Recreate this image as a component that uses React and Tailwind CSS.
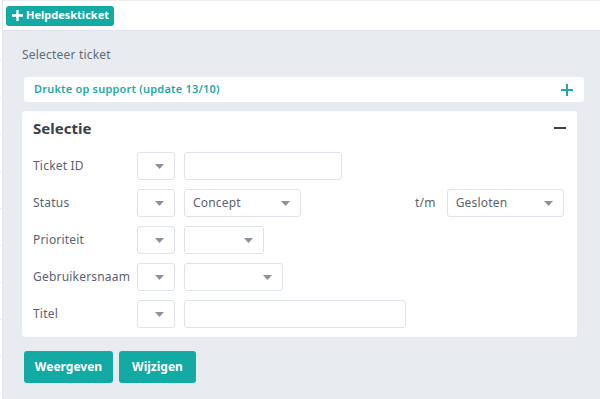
import React from 'react';

const Caret = () => (
  <svg width="9" height="5" viewBox="0 0 9 5" className="shrink-0">
    <path d="M0 0h9L4.5 5z" fill="#8a909c" />
  </svg>
);

const Select = ({ width, value }) => (
  <div
    className={`h-[28px] ${width} flex items-center justify-between pl-2 pr-[10px] bg-white border border-[#dde2ea] rounded-[3px] text-[12px] tracking-[0.2px] text-[#5b6270]`}
  >
    <span>{value}</span>
    <Caret />
  </div>
);

const Input = ({ width }) => (
  <div className={`h-[28px] ${width} bg-white border border-[#dde2ea] rounded-[3px]`} />
);

const Row = ({ label, children }) => (
  <div className="flex items-center h-[28px]">
    <div className="w-[104px] text-[12px] tracking-[0.2px] text-[#5b6270]">{label}</div>
    <Select width="w-[38px]" />
    <div className="ml-[9px] flex items-center">{children}</div>
  </div>
);

export default function App() {
  const rows = [0, 1, 2, 3, 4, 5, 6, 7, 8, 9];
  return (
    <div className="w-[600px] h-[399px] flex overflow-hidden bg-white" style={{ fontFamily: '"Noto Sans", "Open Sans", sans-serif' }}>
      <div className="w-[3px] border-r border-[#e3e6ea] flex flex-col pt-[60px] gap-[36px]">
        {rows.map((r) => (
          <div key={r} className="h-px bg-[#eceef1]" />
        ))}
      </div>
      <div className="flex-1 flex flex-col">
        <div className="h-[31px] border-t border-[#eceef1] border-b border-b-[#dfe3e9] flex items-center pl-[3px]">
          <button className="h-[20px] px-[5px] flex items-center gap-[2px] bg-[#14aaa4] rounded-[3px] text-white text-[11px] font-bold">
            <svg width="13" height="13" viewBox="0 0 13 13">
              <path d="M6.5 1v11M1 6.5h11" stroke="white" strokeWidth="2.4" />
            </svg>
            Helpdeskticket
          </button>
        </div>
        <div className="flex-1 bg-[#e8ecf0] pl-[19px] pt-[16px]">
          <div className="text-[12px] tracking-[0.2px] text-[#646b78] leading-[16px]">Selecteer ticket</div>
          <div className="mt-[14px] ml-[2px] w-[560px] h-[25px] bg-white rounded-[3px] flex items-center justify-between pl-[10px] pr-[11px]">
            <span className="text-[11px] font-semibold tracking-[0.2px] text-[#1fa9a3]">Drukte op support (update 13/10)</span>
            <svg width="12" height="12" viewBox="0 0 12 12">
              <path d="M6 0v12M0 6h12" stroke="#1fa9a3" strokeWidth="2" />
            </svg>
          </div>
          <div className="mt-[9px] w-[555px] bg-white rounded-[3px] pl-[11px] pr-[11px] pt-[6px] pb-[9px]">
            <div className="flex items-center justify-between h-[22px]">
              <span className="text-[15px] font-bold text-[#3a404d]">Selectie</span>
              <div className="w-[12px] h-[2px] bg-[#3a404d]" />
            </div>
            <div className="mt-[13px] flex flex-col gap-[9px]">
              <Row label="Ticket ID">
                <Input width="w-[158px]" />
              </Row>
              <Row label="Status">
                <Select width="w-[117px]" value="Concept" />
                <span className="ml-[114px] text-[12px] tracking-[0.2px] text-[#5b6270]">t/m</span>
                <div className="ml-[11px]">
                  <Select width="w-[117px]" value="Gesloten" />
                </div>
              </Row>
              <Row label="Prioriteit">
                <Select width="w-[80px]" />
              </Row>
              <Row label="Gebruikersnaam">
                <Select width="w-[99px]" />
              </Row>
              <Row label="Titel">
                <Input width="w-[222px]" />
              </Row>
            </div>
          </div>
          <div className="mt-[14px] ml-[2px] flex gap-[6px]">
            <button className="h-[32px] w-[89px] bg-[#13aaa4] rounded-[3px] text-white text-[12px] font-bold">Weergeven</button>
            <button className="h-[32px] w-[77px] bg-[#13aaa4] rounded-[3px] text-white text-[12px] font-bold">Wijzigen</button>
          </div>
        </div>
      </div>
    </div>
  );
}
